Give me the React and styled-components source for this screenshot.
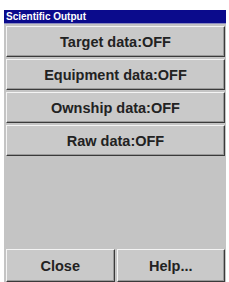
import React from "react";
import styled, { createGlobalStyle } from "styled-components";

const Global = createGlobalStyle`
    html, body {
        margin: 0;
        padding: 0;
        background: #ffffff;
    }
    body {
        font-family: "Liberation Sans", Arial, sans-serif;
    }
`;

const Page = styled.div`
    width: 229px;
    height: 282px;
    padding: 10px 3px 0 4px;
    box-sizing: border-box;
    overflow: hidden;
`;

const Window = styled.div`
    display: flex;
    flex-direction: column;
    height: 272px;
    background: #c4c4c4;
`;

const TitleBar = styled.div`
    height: 13px;
    background: #0b0b8c;
    color: #ffffff;
    font-size: 10px;
    font-weight: bold;
    line-height: 13px;
    padding-left: 2px;
    border-bottom: 1px solid #8a8ac0;
`;

const Body = styled.div`
    flex: 1;
    display: flex;
    flex-direction: column;
    justify-content: space-between;
    padding: 2px 1px 0 2px;
`;

const List = styled.div`
    display: flex;
    flex-direction: column;
    gap: 2px;
`;

const Button = styled.button`
    height: ${(p) => p.h || 31}px;
    flex: ${(p) => (p.grow ? 1 : "none")};
    margin: 0;
    padding: 0;
    background: #c9c9c9;
    border: 1px solid;
    border-color: #f4f4f4 #3a3a3a #3a3a3a #f4f4f4;
    box-shadow: inset -1px -1px 0 #9a9a9a;
    color: #222222;
    font-family: "Liberation Sans", Arial, sans-serif;
    font-size: 14.5px;
    font-weight: bold;
    text-align: center;
`;

const Footer = styled.div`
    display: flex;
    gap: 2px;
`;

const items = ["Target data:OFF", "Equipment data:OFF", "Ownship data:OFF", "Raw data:OFF"];

const App = () => {
    return (
        <Page>
            <Global />
            <Window>
                <TitleBar>Scientific Output</TitleBar>
                <Body>
                    <List>
                        {items.map((item) => (
                            <Button key={item}>{item}</Button>
                        ))}
                    </List>
                    <Footer>
                        <Button grow h={33}>Close</Button>
                        <Button grow h={33}>Help...</Button>
                    </Footer>
                </Body>
            </Window>
        </Page>
    );
};

export default App;
